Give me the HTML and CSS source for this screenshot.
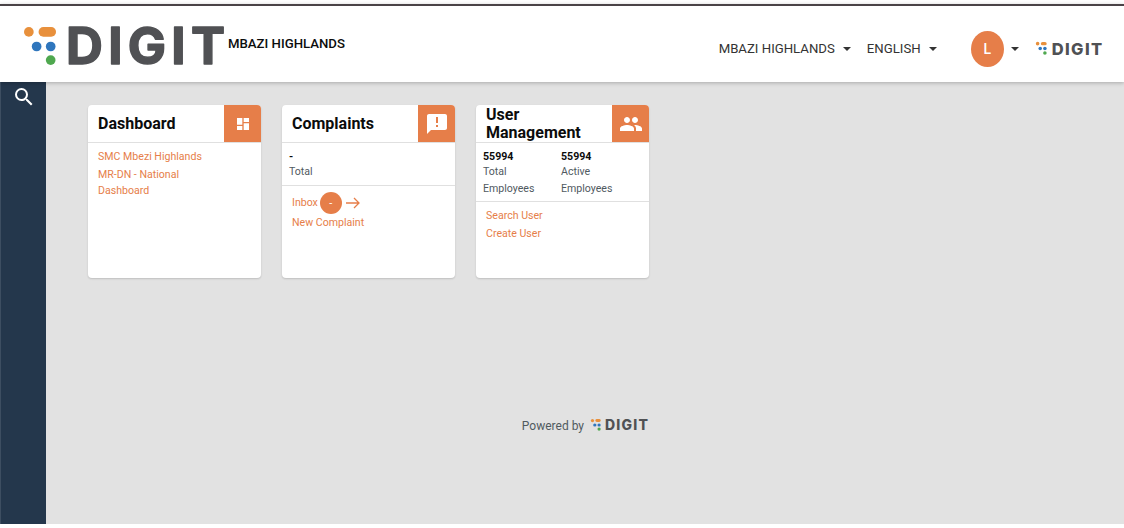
FILE: index.html
```html
<!DOCTYPE html>
<html lang="en">
<head>
<meta charset="utf-8">
<title>DIGIT</title>
<link rel="stylesheet" href="styles.css">
</head>
<body>
<div class="app">
  <header class="topbar">
    <div class="brand">
      <svg class="mark-lg" viewBox="0 0 34 40" aria-hidden="true">
        <circle cx="5" cy="5" r="5" fill="#e8903c"/>
        <rect x="15" y="0" width="18" height="10" rx="5" fill="#e8903c"/>
        <circle cx="13" cy="20" r="5" fill="#2f76bd"/>
        <circle cx="27.500" cy="20" r="5" fill="#2f76bd"/>
        <circle cx="27.500" cy="34" r="5" fill="#4fa84f"/>
      </svg>
      <svg class="wordmark" viewBox="0 0 158 42"><text class="wordmark-text" x="-3" y="39" textLength="159" lengthAdjust="spacing">DIGIT</text></svg>
      <span class="city">MBAZI HIGHLANDS</span>
    </div>
    <nav class="menu">
      <span class="menu-item">MBAZI HIGHLANDS<i class="caret"></i></span>
      <span class="menu-item">ENGLISH<i class="caret"></i></span>
      <span class="user"><span class="avatar">L</span><i class="caret"></i></span>
      <span class="logo-sm">
        <svg class="mark-sm" viewBox="0 0 34 40" aria-hidden="true">
          <circle cx="5" cy="5" r="5.500" fill="#e8903c"/>
          <rect x="15" y="0" width="18" height="10" rx="5" fill="#e8903c"/>
          <circle cx="13" cy="20" r="5.500" fill="#2f76bd"/>
          <circle cx="27.500" cy="20" r="5.500" fill="#2f76bd"/>
          <circle cx="27.500" cy="34" r="5.500" fill="#4fa84f"/>
        </svg>
        <span class="wordmark-sm">DIGIT</span>
      </span>
    </nav>
  </header>
  <div class="body-row">
    <aside class="sidebar">
      <svg class="search" viewBox="0 0 24 24" aria-hidden="true"><path fill="#fff" d="M15.500 14h-.79l-.28-.27A6.470 6.470 0 0 0 16 9.500 6.500 6.500 0 1 0 9.500 16c1.610 0 3.090-.59 4.230-1.570l.27.28v.79l5 4.990L20.490 19l-4.990-5zm-6 0C7.010 14 5 11.990 5 9.500S7.010 5 9.500 5 14 7.010 14 9.500 11.990 14 9.500 14z"/></svg>
    </aside>
    <main class="content">
      <div class="cards">
        <section class="card">
          <div class="card-head">
            <h2 class="card-title">Dashboard</h2>
            <span class="card-icon"><svg viewBox="0 0 24 24" aria-hidden="true"><path fill="#fff" d="M3 13h8V3H3v10zm0 8h8v-6H3v6zm10 0h8V11h-8v10zm0-18v6h8V3h-8z"/></svg></span>
          </div>
          <div class="links links-dash">
            <a class="link">SMC Mbezi Highlands</a>
            <a class="link link-wrap">MR-DN - National Dashboard</a>
          </div>
        </section>
        <section class="card">
          <div class="card-head">
            <h2 class="card-title">Complaints</h2>
            <span class="card-icon icon-big"><svg viewBox="0 0 24 24" aria-hidden="true"><path fill="#fff" d="M20 2H4c-1.100 0-2 .9-2 2v18l4-4h14c1.100 0 2-.9 2-2V4c0-1.100-.9-2-2-2zm-7 9h-2V5h2v6zm0 4h-2v-2h2v2z"/></svg></span>
          </div>
          <div class="stats stats-one">
            <div class="stat"><b class="stat-num">-</b><span class="stat-label">Total</span></div>
          </div>
          <div class="links links-complaints">
            <div class="inbox-row">
              <a class="link">Inbox</a>
              <span class="badge">-</span>
              <svg class="arrow" viewBox="0 0 14 12" aria-hidden="true"><path d="M0 6h13M8 1l5 5-5 5" fill="none" stroke="#e67e49" stroke-width="1.300"/></svg>
            </div>
            <a class="link">New Complaint</a>
          </div>
        </section>
        <section class="card">
          <div class="card-head">
            <h2 class="card-title">User Management</h2>
            <span class="card-icon icon-big"><svg viewBox="0 0 24 24" aria-hidden="true"><path fill="#fff" d="M16 11c1.660 0 2.990-1.340 2.990-3S17.660 5 16 5s-3 1.340-3 3 1.340 3 3 3zm-8 0c1.660 0 2.990-1.340 2.990-3S9.660 5 8 5 5 6.340 5 8s1.340 3 3 3zm0 2c-2.330 0-7 1.170-7 3.500V19h14v-2.500c0-2.330-4.670-3.500-7-3.500zm8 0c-.29 0-.62.020-.97.050 1.160.84 1.970 1.970 1.970 3.450V19h6v-2.500c0-2.330-4.670-3.500-7-3.500z"/></svg></span>
          </div>
          <div class="stats stats-two">
            <div class="stat"><b class="stat-num">55994</b><span class="stat-label">Total Employees</span></div>
            <div class="stat"><b class="stat-num">55994</b><span class="stat-label">Active Employees</span></div>
          </div>
          <div class="links links-user">
            <a class="link">Search User</a>
            <a class="link">Create User</a>
          </div>
        </section>
      </div>
      <footer class="powered">
        <span class="powered-text">Powered by</span>
        <svg class="mark-xs" viewBox="0 0 34 40" aria-hidden="true">
          <circle cx="5" cy="5" r="5.500" fill="#e8903c"/>
          <rect x="15" y="0" width="18" height="10" rx="5" fill="#e8903c"/>
          <circle cx="13" cy="20" r="5.500" fill="#2f76bd"/>
          <circle cx="27.500" cy="20" r="5.500" fill="#2f76bd"/>
          <circle cx="27.500" cy="34" r="5.500" fill="#4fa84f"/>
        </svg>
        <span class="wordmark-xs">DIGIT</span>
      </footer>
    </main>
  </div>
</div>
</body>
</html>
```

FILE: styles.css
```css
* { box-sizing: border-box; }
html, body { margin: 0; padding: 0; height: 100%; background: #fff; overflow: hidden; }
body { font-family: Roboto, "Liberation Sans", sans-serif; color: #0b0c0c; }

.app { height: 524px; padding-top: 4px; display: flex; flex-direction: column; background: #fff; }

.topbar {
  height: 78px; flex: none; display: flex; align-items: flex-start; justify-content: space-between;
  background: #fff; border-top: 2px solid #4a4347; position: relative; z-index: 2;
  box-shadow: 0 1px 4px rgba(0,0,0,.25);
}
.brand { display: flex; align-items: flex-start; padding: 21px 0 0 24px; }
.mark-lg { width: 33px; height: 39px; flex: none; }
.wordmark { width: 158px; height: 42px; margin: -2px 0 0 12px; flex: none; overflow: visible; }
.wordmark-text {
  font-family: Inter, sans-serif; font-weight: 700; font-size: 51px;
  fill: #505154; stroke: #505154; stroke-width: 1.500px; stroke-linejoin: round;
}
.city { font-size: 13.200px; font-weight: 500; line-height: 16px; margin: 9px 0 0 1px; color: #0b0c0c; }

.menu { display: flex; align-items: center; padding: 24px 21px 0 0; font-size: 13.200px; color: #333; height: 61px; }
.menu-item { display: flex; align-items: center; }
.menu-item + .menu-item { margin-left: 16px; }
.caret { display: inline-block; width: 0; height: 0; margin-left: 8px; border: 4px solid transparent; border-top-color: #333; border-bottom: 0; }
.user { display: flex; align-items: center; margin-left: 34px; }
.user .caret { margin-left: 7px; }
.avatar { width: 33px; height: 36px; border-radius: 50%; background: #e67e49; color: #fff; font-size: 14px; font-weight: 500; display: flex; align-items: center; justify-content: center; }
.logo-sm { display: flex; align-items: center; margin-left: 17px; }
.mark-sm { width: 11px; height: 13px; overflow: visible; }
.wordmark-sm { font-family: Inter, sans-serif; font-weight: 800; font-size: 16.500px; line-height: 16px; letter-spacing: 1.400px; margin-right: -.6px; color: #505154; margin-left: 5px; }

.body-row { flex: 1; display: flex; min-height: 0; }
.sidebar { width: 46px; flex: none; background: #24374c; display: flex; justify-content: center; align-items: flex-start; border-left: 1px solid #3d4e61; padding: 3px 0 0 1px; }
.search { width: 24px; height: 24px; }

.content { flex: 1; background: #e2e2e2; padding: 23px 0 0 42px; display: flex; flex-direction: column; }
.cards { display: flex; gap: 21px; }
.card { width: 173px; height: 173px; background: #fff; border-radius: 4px; box-shadow: 0 1px 2px rgba(0,0,0,.16); overflow: hidden; display: flex; flex-direction: column; }
.card-head { height: 38px; flex: none; display: flex; align-items: center; justify-content: space-between; border-bottom: 1px solid #e0e0e0; padding-left: 10px; }
.card-title { margin: 0; font-size: 16px; font-weight: 700; line-height: 18px; color: #0b0c0c; }
.card-icon { width: 37px; height: 37px; flex: none; background: #e67e49; display: flex; align-items: center; justify-content: center; align-self: flex-start; }
.card-icon svg { width: 16px; height: 16px; }
.card-icon.icon-big svg { width: 24px; height: 24px; }

.link { display: block; font-size: 10.600px; line-height: 16px; color: #e67e49; }
.links-dash { padding: 6px 10px 0; display: flex; flex-direction: column; gap: 2px; }
.link-wrap { width: 100px; }

.stats { border-bottom: 1px solid #e0e0e0; padding: 6px 7px 0; flex: none; }
.stats-one { height: 43px; }
.stats-two { height: 59px; display: flex; gap: 0; }
.stats-two .stat { width: 78px; }
.stat-num { display: block; font-size: 10.600px; font-weight: 700; line-height: 15px; color: #0b0c0c; }
.stat-label { display: block; font-size: 10.600px; line-height: 16.500px; color: #505a5f; width: 60px; }

.links-complaints { padding: 6px 10px 0; }
.inbox-row { display: flex; align-items: center; height: 22px; margin-bottom: 1px; }
.badge { width: 22px; height: 22px; border-radius: 50%; background: #e67e49; color: #fff; font-size: 11px; display: flex; align-items: center; justify-content: center; margin-left: 2px; }
.arrow { width: 14px; height: 12px; margin-left: 4px; }
.links-user { padding: 6px 10px 0; display: flex; flex-direction: column; gap: 2px; }

.powered { display: flex; align-items: center; justify-content: center; margin-top: 138px; padding-right: 41px; height: 20px; }
.powered-text { font-size: 12px; color: #505a5f; margin-right: 7px; }
.mark-xs { width: 10px; height: 12px; margin-bottom: 3px; overflow: visible; }
.wordmark-xs { font-family: Inter, sans-serif; font-weight: 800; font-size: 14px; line-height: 14px; letter-spacing: 1.200px; color: #505154; margin: 0 0 3px 4px; }
```
